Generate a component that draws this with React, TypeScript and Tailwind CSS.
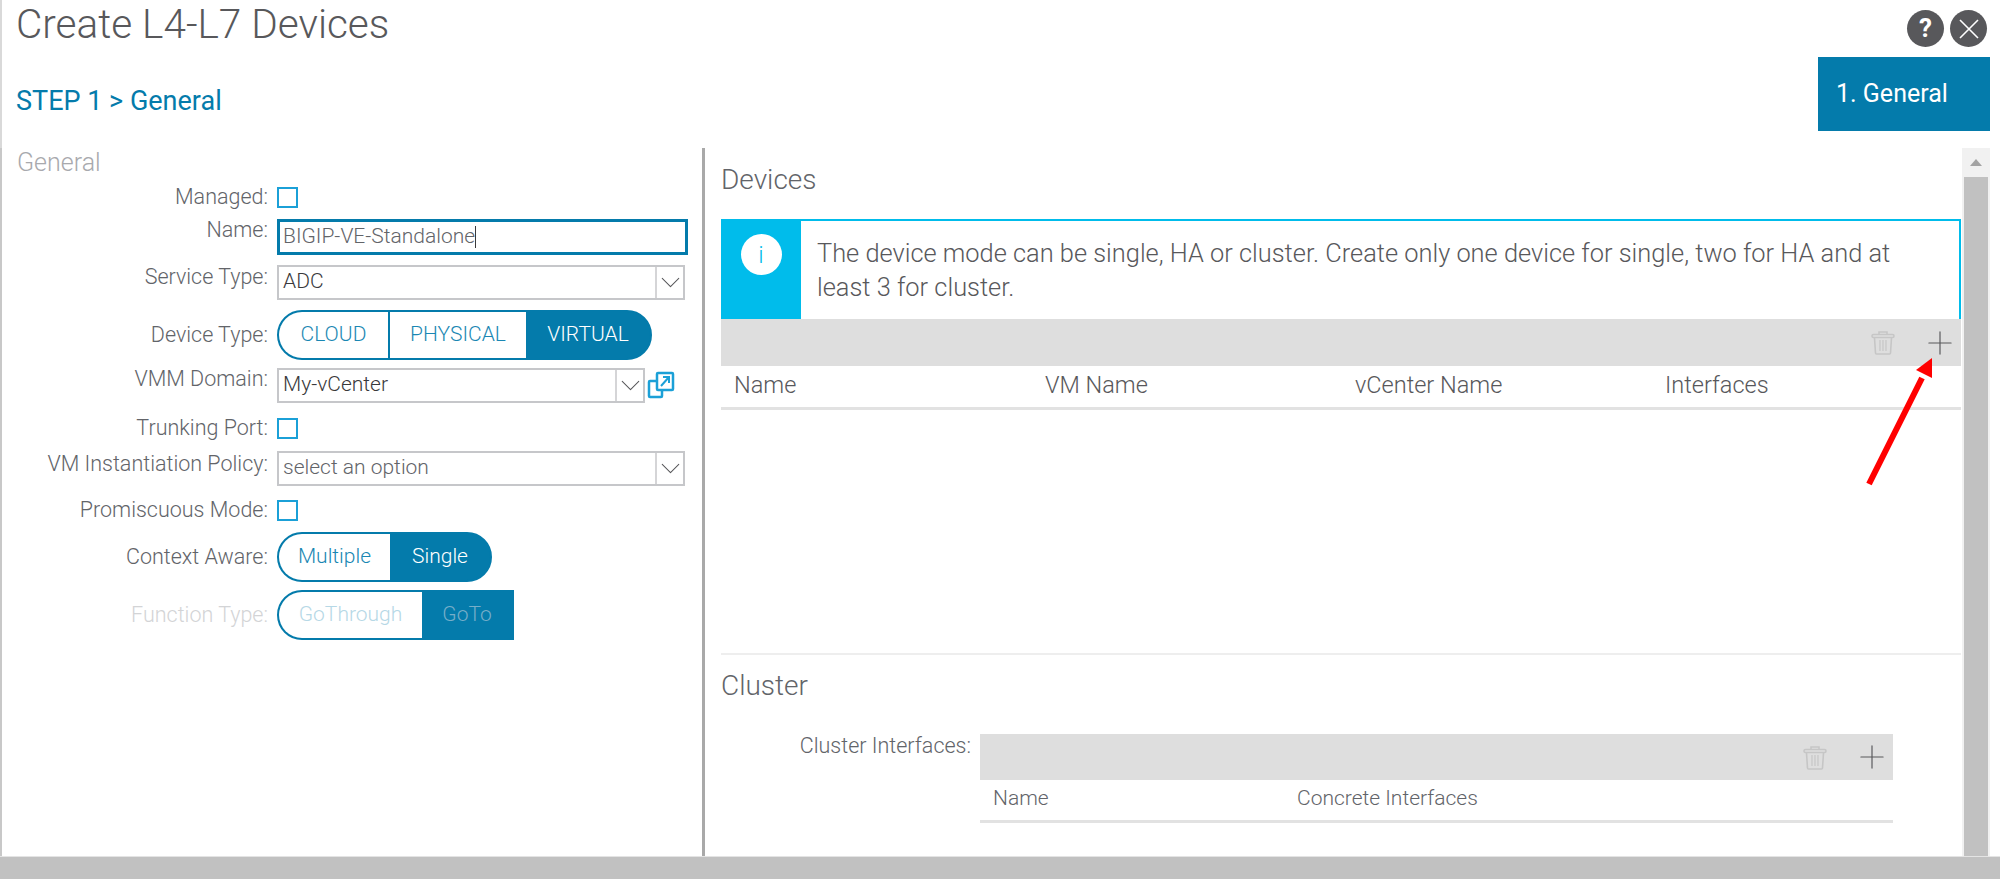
import React from 'react';
import { ChevronDown, Plus } from 'lucide-react';

const Field = ({ label, top, h, muted, center, labelTop = '', children }: { label: string; top: string; h: string; muted?: boolean; center?: boolean; labelTop?: string; children: React.ReactNode }) => (
    <div className={`flex ${center ? 'items-center' : 'items-start'} ${top} ${h}`}>
        <div className={`w-[266px] shrink-0 text-right text-[21.5px] leading-[20px] ${labelTop} ${muted ? 'text-[#d3d4d6]' : 'text-[#626469]'}`}>{label}</div>
        <div className="ml-[9px] flex items-start">{children}</div>
    </div>
);

const Checkbox = () => <div className="w-[21px] h-[21px] border-2 border-[#1ba0d7]" />;

const Select = ({ value, width, muted }: { value: string; width: string; muted?: boolean }) => (
    <div className={`flex h-[35px] border-2 border-[#c6c7ca] ${width}`}>
        <div className={`flex-1 pl-[4px] text-[21px] leading-[28px] ${muted ? 'text-[#626469]' : 'text-[#39393b]'}`}>{value}</div>
        <div className="w-[28px] border-l-2 border-[#d5d5d7] flex items-center justify-center overflow-hidden">
            <ChevronDown size={33} strokeWidth={0.75} className="shrink-0 text-[#58585b]" />
        </div>
    </div>
);

const Toggle = ({ items, active, widths, squareEnd, muted }: { items: string[]; active: number; widths: string[]; squareEnd?: boolean; muted?: boolean }) => (
    <div className={`flex h-[50px] overflow-hidden border-2 border-[#047bab] bg-[#047bab] rounded-l-[25px] ${squareEnd ? '' : 'rounded-r-[25px]'}`}>
        {items.map((item, index) => (
            <div
                key={item}
                className={`flex items-center justify-center text-[21px] ${widths[index]} ${index > 0 && index !== active ? 'border-l-2 border-[#047bab]' : ''} ${
                    index === active
                        ? muted ? 'text-[#76aec9]' : 'text-white'
                        : muted ? 'bg-white text-[#b6d8e6]' : 'bg-white text-[#1a87b3]'
                }`}
            >
                {item}
            </div>
        ))}
    </div>
);

const TrashIcon = () => (
    <svg width="24" height="25" viewBox="0 0 24 25" fill="none" stroke="#c6c6c6" strokeWidth="1.6">
        <path d="M8 4V2h8v2" />
        <rect x="1" y="4.5" width="22" height="3" rx="1.5" />
        <path d="M3.5 8l1 15a1 1 0 0 0 1 1h13a1 1 0 0 0 1-1l1-15" />
        <path d="M9 10v11M12 10v11M15 10v11" strokeWidth="1.2" />
    </svg>
);

const ActionBar = ({ className }: { className: string }) => (
    <div className={`flex items-center justify-end bg-[#dedede] ${className}`}>
        <TrashIcon />
        <Plus size={38} strokeWidth={0.75} className="ml-[26px] text-[#58585b]" />
    </div>
);

export default function App() {
    return (
        <div className="relative flex flex-col w-[2000px] h-[879px] overflow-hidden bg-white font-['Roboto',sans-serif] font-light">
            {/* Header */}
            <div className="flex h-[148px] border-l-2 border-[#d9d9d9]">
                <div className="flex-1 pl-[14px]">
                    <h1 className="text-[40.5px] leading-[48px] text-[#58585b] font-light">Create L4-L7 Devices</h1>
                    <div className="mt-[37px] text-[27px] leading-[32px] text-[#047bab] font-normal">STEP 1 &gt; General</div>
                </div>
                <div className="flex flex-col items-end w-[300px] pr-[10px]">
                    <div className="flex gap-[6px] mt-[10px] mr-[3px]">
                        <div className="flex items-center justify-center w-[37px] h-[37px] rounded-full bg-[#58585b] text-white font-bold text-[26px]">?</div>
                        <div className="flex items-center justify-center w-[37px] h-[37px] rounded-full bg-[#58585b]">
                            <svg width="22" height="22" viewBox="0 0 22 22" fill="none" stroke="white" strokeWidth="1.6"><path d="M2 2l18 18M20 2L2 20" /></svg>
                        </div>
                    </div>
                    <div className="flex items-center w-[172px] h-[74px] mt-[10px] pl-[18px] bg-[#047bab] text-white text-[25px] font-normal">1. General</div>
                </div>
            </div>

            {/* Body */}
            <div className="flex flex-1 border-l-2 border-[#c8c8c8]">
                {/* General form */}
                <div className="w-[700px] shrink-0 flex flex-col">
                    <div className="pl-[15px] pt-[1px] text-[25px] leading-[28px] text-[#a8a9ad]">General</div>
                    <Field label="Managed:" top="mt-[10px]" h="h-[21px]"><Checkbox /></Field>
                    <Field label="Name:" top="mt-[11px]" h="h-[36px]" labelTop="pt-[1px]">
                        <div className="flex items-center w-[411px] h-[36px] pl-[3px] border-[3px] border-[#047bab] text-[21px] text-[#626469]">
                            BIGIP-VE-Standalone<span className="w-px h-[22px] bg-[#39393b]" />
                        </div>
                    </Field>
                    <Field label="Service Type:" top="mt-[10px]" h="h-[35px]" labelTop="pt-[2px]"><Select value="ADC" width="w-[408px]" /></Field>
                    <Field label="Device Type:" top="mt-[10px]" h="h-[50px]" center>
                        <Toggle items={['CLOUD', 'PHYSICAL', 'VIRTUAL']} active={2} widths={['w-[109px]', 'w-[138px]', 'w-[124px]']} />
                    </Field>
                    <Field label="VMM Domain:" top="mt-[8px]" h="h-[35px]" labelTop="pt-[1px]">
                        <Select value="My-vCenter" width="w-[368px]" />
                        <svg className="ml-[2px] mt-[3px]" width="28" height="28" viewBox="0 0 28 28" fill="none" stroke="#1ba0d7" strokeWidth="2.5">
                            <path d="M9 10H3a1 1 0 0 0-1 1v14a1 1 0 0 0 1 1h11a1 1 0 0 0 1-1v-5" />
                            <rect x="10" y="2" width="16" height="17" rx="1" />
                            <path d="M14 15l8-9M16 6h6v6" strokeWidth="2" />
                        </svg>
                    </Field>
                    <Field label="Trunking Port:" top="mt-[15px]" h="h-[21px]"><Checkbox /></Field>
                    <Field label="VM Instantiation Policy:" top="mt-[12px]" h="h-[35px]" labelTop="pt-[3px]"><Select value="select an option" width="w-[408px]" muted /></Field>
                    <Field label="Promiscuous Mode:" top="mt-[14px]" h="h-[21px]"><Checkbox /></Field>
                    <Field label="Context Aware:" top="mt-[11px]" h="h-[50px]" center>
                        <Toggle items={['Multiple', 'Single']} active={1} widths={['w-[111px]', 'w-[100px]']} />
                    </Field>
                    <Field label="Function Type:" top="mt-[8px]" h="h-[50px]" muted center>
                        <Toggle items={['GoThrough', 'GoTo']} active={1} widths={['w-[143px]', 'w-[90px]']} squareEnd muted />
                    </Field>
                </div>

                {/* Divider */}
                <div className="w-[3px] shrink-0 bg-[#a9a9a9]" />

                {/* Devices / Cluster */}
                <div className="flex-1 min-w-0 flex flex-col pl-[16px] pr-[1px]">
                    <h2 className="mt-[17px] text-[28px] leading-[30px] text-[#626469] font-light">Devices</h2>
                    <div className="mt-[24px] flex h-[100px] border-t-2 border-r-2 border-[#00bceb]">
                        <div className="w-[80px] shrink-0 bg-[#00bceb] flex justify-center pt-[13px]">
                            <div className="flex items-center justify-center w-[41px] h-[41px] rounded-full bg-white text-[#00bceb] text-[24px]">i</div>
                        </div>
                        <p className="pl-[16px] pr-[40px] pt-[15px] text-[25.4px] leading-[34px] text-[#58585b]">
                            The device mode can be single, HA or cluster. Create only one device for single, two for HA and at least 3 for cluster.
                        </p>
                    </div>
                    <ActionBar className="h-[47px] pr-[2px]" />
                    <div className="flex h-[44px] items-center pb-[1px] border-b-[3px] border-[#e2e2e2] pl-[13px] text-[23.5px] text-[#58585b]">
                        <div className="w-[311px]">Name</div>
                        <div className="w-[310px]">VM Name</div>
                        <div className="w-[310px]">vCenter Name</div>
                        <div>Interfaces</div>
                    </div>
                    <div className="mt-[243px] h-[2px] bg-[#eeeeee]" />
                    <h2 className="mt-[16px] text-[28px] leading-[30px] text-[#626469] font-light">Cluster</h2>
                    <div className="mt-[33px] flex">
                        <div className="w-[250px] text-right text-[21.5px] leading-[24px] text-[#626469]">Cluster Interfaces:</div>
                        <div className="ml-[9px] w-[913px]">
                            <ActionBar className="h-[46px] pr-[2px]" />
                            <div className="flex h-[43px] items-center pb-[2px] border-b-[3px] border-[#e2e2e2] pl-[13px] text-[21px] text-[#626469]">
                                <div className="w-[304px]">Name</div>
                                <div>Concrete Interfaces</div>
                            </div>
                        </div>
                    </div>
                </div>

                {/* Scrollbar */}
                <div className="w-[28px] shrink-0 bg-[#f1f1f1] flex flex-col items-center">
                    <div className="h-[29px] flex items-center justify-center">
                        <div className="w-0 h-0 border-x-[6px] border-x-transparent border-b-[7px] border-b-[#a3a3a3]" />
                    </div>
                    <div className="w-[24px] flex-1 bg-[#c1c1c1]" />
                </div>
                <div className="w-[10px] shrink-0" />
            </div>

            {/* Footer */}
            <div className="h-[23px] shrink-0 bg-[#c1c1c1] border-t border-[#e4e4e4]" />

            {/* Red annotation arrow */}
            <svg className="absolute left-[1860px] top-[350px]" width="80" height="140" viewBox="0 0 80 140" fill="none">
                <path d="M9 134L62 28" stroke="#ff0000" strokeWidth="6" />
                <path d="M72 8L56 20L72 28Z" fill="#ff0000" />
            </svg>
        </div>
    );
}
